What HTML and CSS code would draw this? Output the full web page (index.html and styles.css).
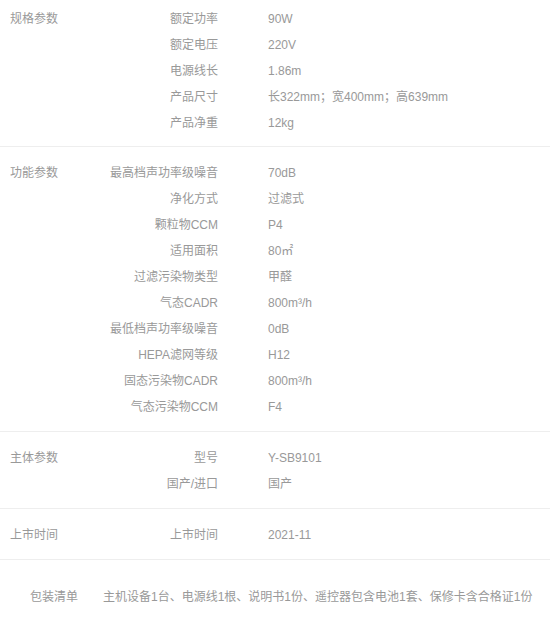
FILE: index.html
```html
<!DOCTYPE html>
<html>
<head>
    <title>规格参数</title>
    <link rel="stylesheet" href="styles.css">
</head>
<body>
    <div class="spec-table">
        <div class="spec-group">
            <div class="group-title">规格参数</div>
            <div class="group-rows">
                <div class="row"><span class="key">额定功率</span><span class="val">90W</span></div>
                <div class="row"><span class="key">额定电压</span><span class="val">220V</span></div>
                <div class="row"><span class="key">电源线长</span><span class="val">1.86m</span></div>
                <div class="row"><span class="key">产品尺寸</span><span class="val">长322mm；宽400mm；高639mm</span></div>
                <div class="row"><span class="key">产品净重</span><span class="val">12kg</span></div>
            </div>
        </div>
        <div class="spec-group">
            <div class="group-title">功能参数</div>
            <div class="group-rows">
                <div class="row"><span class="key">最高档声功率级噪音</span><span class="val">70dB</span></div>
                <div class="row"><span class="key">净化方式</span><span class="val">过滤式</span></div>
                <div class="row"><span class="key">颗粒物CCM</span><span class="val">P4</span></div>
                <div class="row"><span class="key">适用面积</span><span class="val">80㎡</span></div>
                <div class="row"><span class="key">过滤污染物类型</span><span class="val">甲醛</span></div>
                <div class="row"><span class="key">气态CADR</span><span class="val">800m³/h</span></div>
                <div class="row"><span class="key">最低档声功率级噪音</span><span class="val">0dB</span></div>
                <div class="row"><span class="key">HEPA滤网等级</span><span class="val">H12</span></div>
                <div class="row"><span class="key">固态污染物CADR</span><span class="val">800m³/h</span></div>
                <div class="row"><span class="key">气态污染物CCM</span><span class="val">F4</span></div>
            </div>
        </div>
        <div class="spec-group">
            <div class="group-title">主体参数</div>
            <div class="group-rows">
                <div class="row"><span class="key">型号</span><span class="val">Y-SB9101</span></div>
                <div class="row"><span class="key">国产/进口</span><span class="val">国产</span></div>
            </div>
        </div>
        <div class="spec-group">
            <div class="group-title">上市时间</div>
            <div class="group-rows">
                <div class="row"><span class="key">上市时间</span><span class="val">2021-11</span></div>
            </div>
        </div>
        <div class="package">
            <span class="package-key">包装清单</span>
            <span class="package-val">主机设备1台、电源线1根、说明书1份、遥控器包含电池1套、保修卡含合格证1份</span>
        </div>
    </div>
</body>
</html>
```
FILE: styles.css
```css
body {
    margin: 0;
    font-family: "Liberation Sans", "Noto Sans CJK SC", sans-serif;
    font-size: 12px;
    color: #999;
    background: #fff;
}
.spec-table {
    width: 550px;
}
.spec-group {
    display: flex;
    padding: 12px 0;
    border-bottom: 1px solid #eee;
}
.spec-group:first-child {
    padding-top: 5px;
    padding-bottom: 11px;
}
.group-title {
    width: 90px;
    padding: 2px 0 0 10px;
    line-height: 24px;
}
.row {
    display: flex;
    padding-top: 2px;
    line-height: 24px;
}
.key {
    width: 118px;
    text-align: right;
}
.val {
    margin-left: 50px;
}
.package {
    display: flex;
    padding: 25px 0 0 30px;
    line-height: 24px;
}
.package-val {
    margin-left: 25px;
}
```
